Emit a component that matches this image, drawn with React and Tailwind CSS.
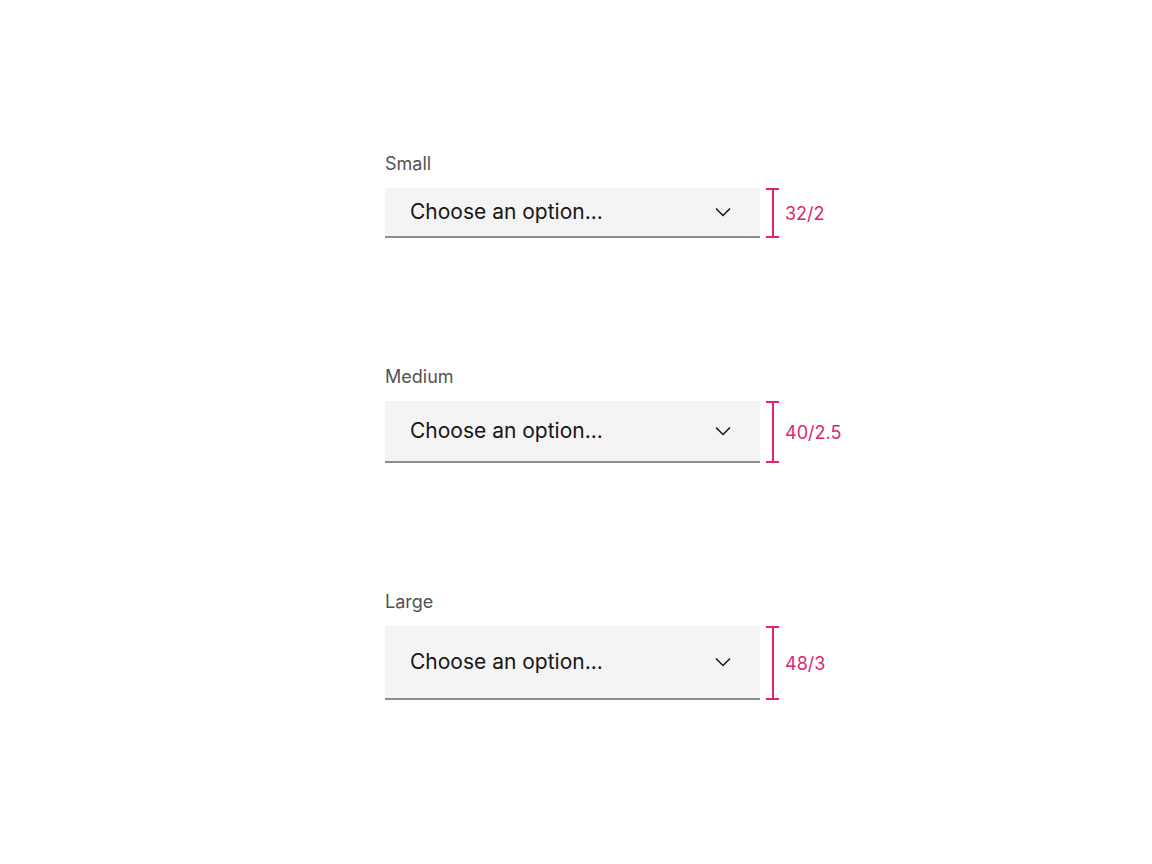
import React from 'react';

const sizes = [
  { label: 'Small', h: 'h-[50px]', spec: '32/2' },
  { label: 'Medium', h: 'h-[62px]', spec: '40/2.5' },
  { label: 'Large', h: 'h-[74px]', spec: '48/3' },
];

function Chevron() {
  return (
    <svg width="24" height="24" viewBox="0 0 16 16" fill="#161616">
      <path d="M8 11L3 6 3.7 5.3 8 9.6 12.3 5.3 13 6z" />
    </svg>
  );
}

function Marker({ spec }) {
  return (
    <div className="flex items-stretch">
      <div className="ml-[6px] flex w-[13px] flex-col items-center">
        <div className="h-[2px] w-[13px] bg-[#dc2672]" />
        <div className="w-[2px] flex-1 bg-[#dc2672]" />
        <div className="h-[2px] w-[13px] bg-[#dc2672]" />
      </div>
      <span className="ml-[6px] self-center text-[18px] text-[#dc2672]">{spec}</span>
    </div>
  );
}

export default function App() {
  return (
    <div className="min-h-screen bg-white pl-[385px] pt-[152px] font-['Inter','Noto_Sans',sans-serif]">
      <div className="flex flex-col gap-[127px]">
        {sizes.map((s) => (
          <div key={s.label} className="flex flex-col">
            <span className="mb-[12px] text-[18px] leading-[24px] text-[#525252]">{s.label}</span>
            <div className="flex">
              <div
                className={`flex w-[375px] items-center justify-between border-b-2 border-[#8d8d8d] bg-[#f4f4f4] pl-[25px] pr-[25px] ${s.h}`}
              >
                <span className="text-[21px] text-[#161616]">Choose an option...</span>
                <Chevron />
              </div>
              <Marker spec={s.spec} />
            </div>
          </div>
        ))}
      </div>
    </div>
  );
}
